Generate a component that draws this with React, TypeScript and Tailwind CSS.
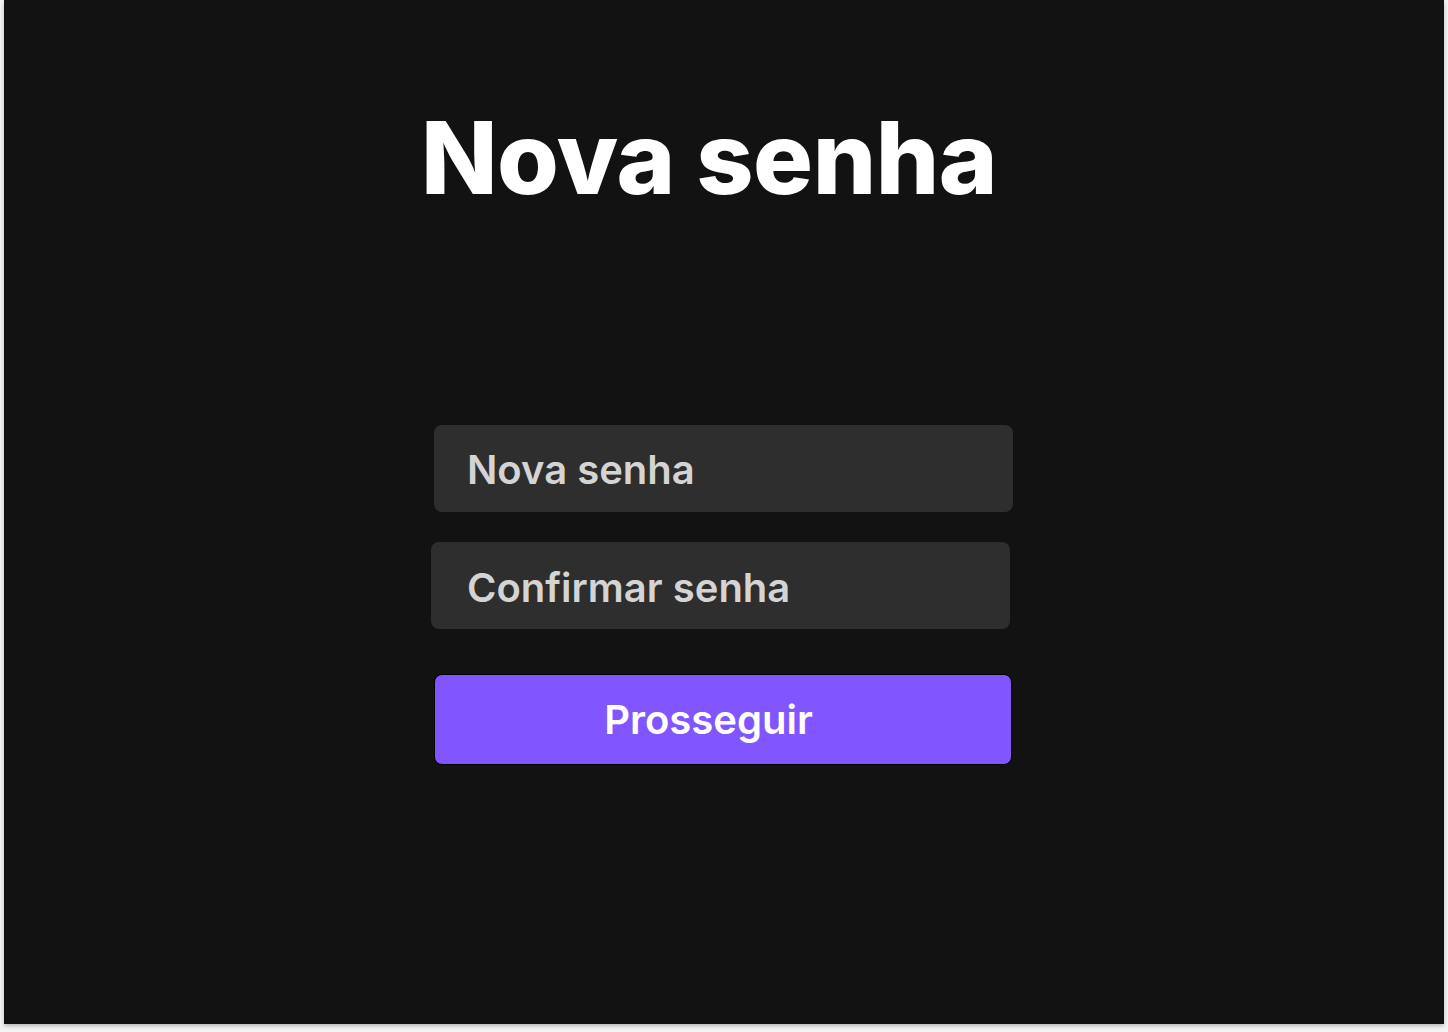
import * as React from 'react'

function Field({ placeholder, className }: { placeholder: string; className: string }) {
  return (
    <input
      type="password"
      placeholder={placeholder}
      className={`h-[87px] w-[579px] rounded-lg bg-[#2e2e2e] text-[40px] font-semibold text-[#d4d4d4] placeholder:text-[#d4d4d4] outline-none ${className}`}
    />
  )
}

export default function App() {
  return (
    <div className="min-h-screen bg-[#f4f4f4] font-['Inter',sans-serif]">
      <div className="ml-[4px] flex h-[1024px] w-[1440px] flex-col items-center bg-[#121212] shadow-[0_2px_4px_rgba(0,0,0,0.25)]">
        <h1 className="mt-[108px] mr-[30px] text-[100px] leading-none font-extrabold tracking-[-0.5px] text-white">
          Nova senha
        </h1>
        <form
          className="mt-[217px] ml-[427px] flex flex-col items-start self-start"
          onSubmit={(e) => e.preventDefault()}
        >
          <Field placeholder="Nova senha" className="ml-[3px] pl-[33px] pt-[1px]" />
          <Field placeholder="Confirmar senha" className="mt-[30px] pl-[36px] pt-[3px]" />
          <button
            type="submit"
            className="mt-[45px] ml-[3px] h-[91px] w-[578px] rounded-lg border border-black bg-[#8155ff] pr-[29px] text-[40px] font-semibold text-white"
          >
            Prosseguir
          </button>
        </form>
      </div>
    </div>
  )
}
